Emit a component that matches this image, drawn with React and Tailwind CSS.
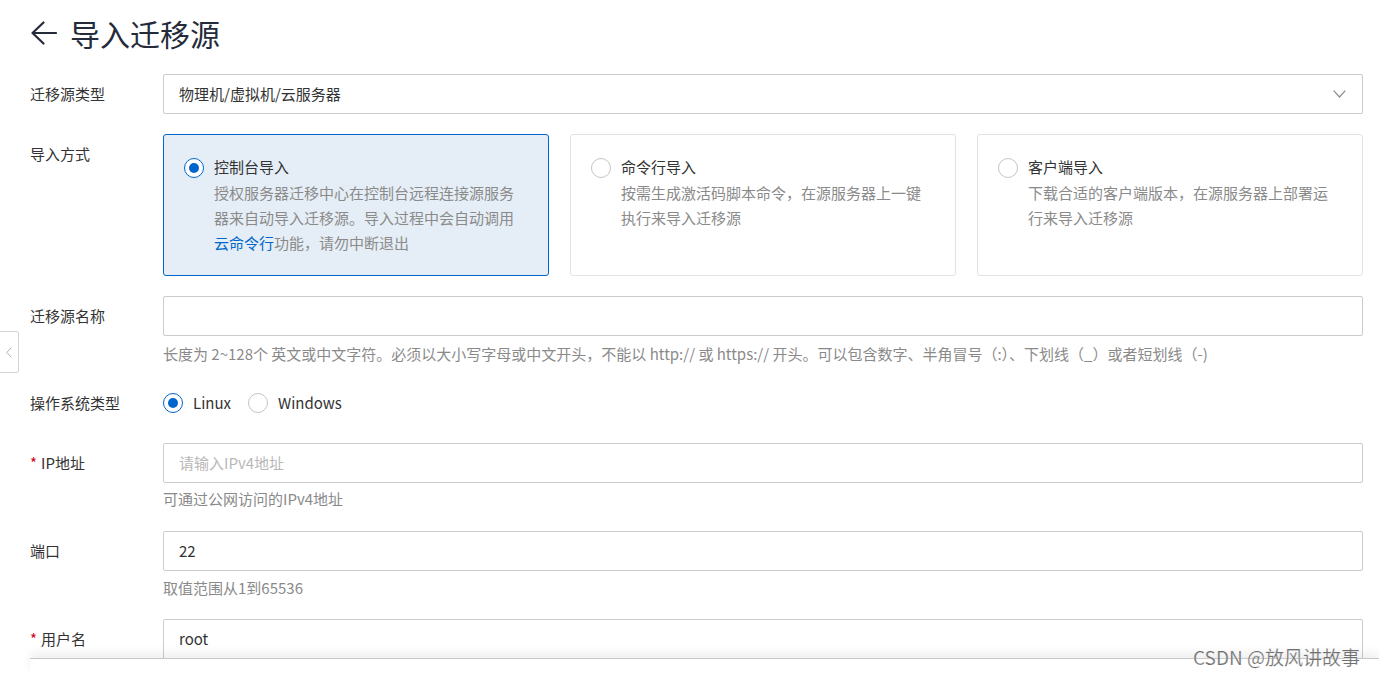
import React from "react";

const FONT = { fontFamily: '"Noto Sans CJK SC", "Noto Sans", sans-serif' };

function Radio({ checked }) {
  return (
    <span
      className={
        "flex h-[20px] w-[20px] shrink-0 items-center justify-center rounded-full bg-white " +
        (checked ? "border-[1.5px] border-[#0066cc]" : "border border-[#c4c4c4]")
      }
    >
      {checked && <span className="h-[10px] w-[10px] rounded-full bg-[#0066cc]" />}
    </span>
  );
}

function Label({ children, required, className = "" }) {
  return (
    <div className={"w-[133px] shrink-0 text-[15px] text-[#333333] " + className}>
      {required && <span className="mr-[4px] text-[#d0021b]">*</span>}
      {children}
    </div>
  );
}

function Input({ value, placeholder }) {
  return (
    <div className="flex h-[40px] w-[1200px] items-center rounded-[2px] border border-[#cccccc] bg-white px-[15px] text-[15px]">
      {value ? (
        <span className="text-[#333333]">{value}</span>
      ) : (
        <span className="text-[#b8b8b8]">{placeholder}</span>
      )}
    </div>
  );
}

function Card({ selected, title, children }) {
  return (
    <div
      className={
        "h-[142px] w-[386px] rounded-[3px] border pl-[20px] pt-[20px] " +
        (selected ? "border-[#0066cc] bg-[#e5eef6]" : "border-[#e2e2e2] bg-white")
      }
    >
      <div className="flex h-[25px] items-center gap-[10px]">
        <Radio checked={selected} />
        <span className="text-[15px] text-[#333333]">{title}</span>
      </div>
      <div className="ml-[30px] w-[301px] text-[15px] leading-[25px] text-[#8a8a8a]">{children}</div>
    </div>
  );
}

export default function App() {
  return (
    <div className="relative h-[677px] w-[1379px] overflow-hidden bg-white" style={FONT}>
      <div className="pl-[30px] pt-[13px]">
        {/* Title */}
        <div className="flex h-[40px] items-center">
          <svg width="26" height="24" viewBox="0 0 26 24" className="ml-[1px]">
            <path d="M1.5 12 H25 M12.5 1.5 L1.5 12 L12.5 22.5" fill="none" stroke="#252b3a" strokeWidth="2.2" strokeLinecap="round" strokeLinejoin="round" />
          </svg>
          <span className="ml-[13px] text-[30px] leading-[40px] text-[#252b3a]">导入迁移源</span>
        </div>

        {/* 迁移源类型 */}
        <div className="mt-[21px] flex items-center">
          <Label>迁移源类型</Label>
          <div className="flex h-[40px] w-[1200px] items-center justify-between rounded-[2px] border border-[#cccccc] bg-white pl-[15px] pr-[16px] text-[15px] text-[#333333]">
            <span>物理机/虚拟机/云服务器</span>
            <svg width="13" height="8" viewBox="0 0 13 8">
              <path d="M0.7 0.7 L6.5 7 L12.3 0.7" fill="none" stroke="#8a8a8a" strokeWidth="1.2" />
            </svg>
          </div>
        </div>

        {/* 导入方式 */}
        <div className="mt-[20px] flex">
          <Label className="pt-[9px] leading-[22px]">导入方式</Label>
          <div className="flex gap-[21px]">
            <Card selected title="控制台导入">
              授权服务器迁移中心在控制台远程连接源服务器来自动导入迁移源。导入过程中会自动调用
              <span className="text-[#0066cc]">云命令行</span>功能，请勿中断退出
            </Card>
            <Card title="命令行导入">按需生成激活码脚本命令，在源服务器上一键执行来导入迁移源</Card>
            <Card title="客户端导入">下载合适的客户端版本，在源服务器上部署运行来导入迁移源</Card>
          </div>
        </div>

        {/* 迁移源名称 */}
        <div className="mt-[20px] flex items-center">
          <Label>迁移源名称</Label>
          <Input value="" placeholder="" />
        </div>
        <div className="ml-[133px] mt-[8px] h-[20px] text-[15px] leading-[20px] text-[#8a8a8a]">
          长度为 2~128个 英文或中文字符。必须以大小写字母或中文开头，不能以 http:// 或 https:// 开头。可以包含数字、半角冒号（:）、下划线（_）或者短划线（-)
        </div>

        {/* 操作系统类型 */}
        <div className="mt-[29px] flex h-[20px] items-center">
          <Label>操作系统类型</Label>
          <div className="flex items-center text-[15px] text-[#333333]">
            <Radio checked />
            <span className="ml-[10px]">Linux</span>
            <span className="ml-[17px]"><Radio /></span>
            <span className="ml-[10px]">Windows</span>
          </div>
        </div>

        {/* IP地址 */}
        <div className="mt-[30px] flex items-center">
          <Label required>IP地址</Label>
          <Input placeholder="请输入IPv4地址" />
        </div>
        <div className="ml-[133px] mt-[6px] h-[20px] text-[15px] leading-[20px] text-[#8a8a8a]">可通过公网访问的IPv4地址</div>

        {/* 端口 */}
        <div className="mt-[22px] flex items-center">
          <Label>端口</Label>
          <Input value="22" />
        </div>
        <div className="ml-[133px] mt-[7px] h-[20px] text-[15px] leading-[20px] text-[#8a8a8a]">取值范围从1到65536</div>

        {/* 用户名 */}
        <div className="mt-[21px] flex items-center">
          <Label required>用户名</Label>
          <Input value="root" />
        </div>
      </div>

      {/* left collapse tab */}
      <div className="absolute left-0 top-[331px] flex h-[42px] w-[19px] items-center justify-center rounded-r-[3px] border border-l-0 border-[#d4d4d4] bg-white">
        <svg width="6" height="11" viewBox="0 0 6 11">
          <path d="M5.3 0.6 L0.8 5.5 L5.3 10.4" fill="none" stroke="#b0b0b0" strokeWidth="1" />
        </svg>
      </div>

      {/* bottom bar */}
      <div className="absolute bottom-0 left-[30px] right-0 top-[658px] border-t border-[#c8c8c8] bg-white shadow-[0_-6px_10px_rgba(0,0,0,0.06)]" />

      {/* watermark */}
      <div className="absolute left-[1193px] top-[645px] text-[19px] leading-[24px] text-[#707070]" style={{ fontFamily: '"Noto Sans CJK SC", sans-serif', WebkitTextStroke: "0.2px #ffffff" }}>
        CSDN @放风讲故事
      </div>
    </div>
  );
}
